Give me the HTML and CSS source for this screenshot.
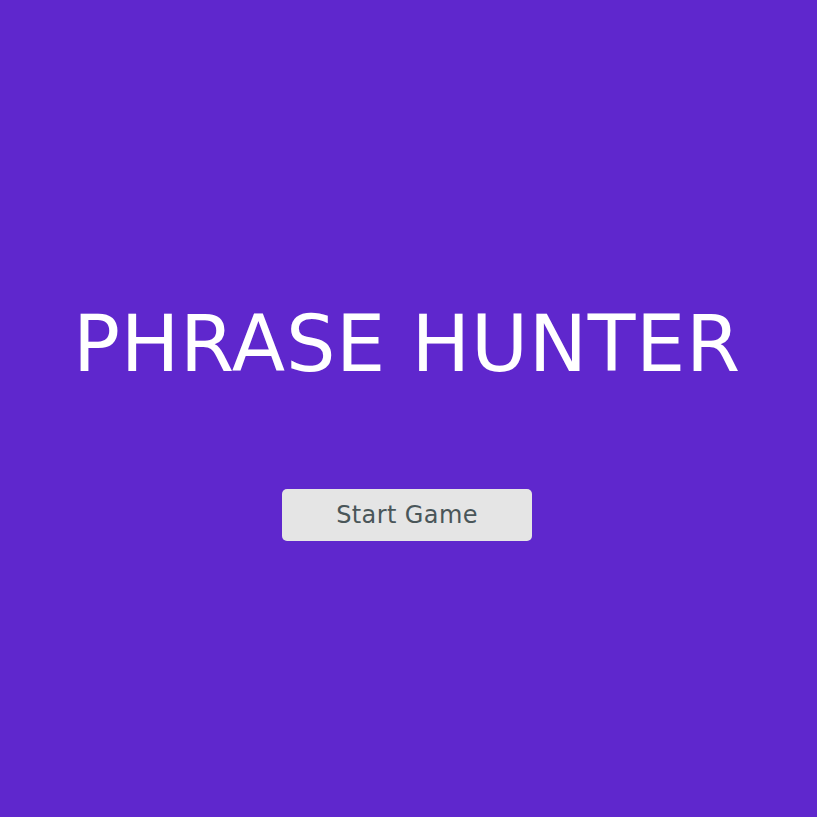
FILE: index.html
```html
<!DOCTYPE html>
<html lang="en">
<head>
<meta charset="utf-8">
<title>Phrase Hunter</title>
<link rel="stylesheet" href="styles.css">
</head>
<body>
<div class="overlay">
  <h2 class="title">PHRASE HUNTER</h2>
  <button class="btn-reset">Start Game</button>
</div>
</body>
</html>
```
FILE: styles.css
```css
html, body {
  margin: 0;
  padding: 0;
  height: 100%;
}
body {
  background: #5f27cd;
  font-family: "DejaVu Sans", "Liberation Sans", sans-serif;
}
.overlay {
  display: flex;
  flex-direction: column;
  align-items: center;
  padding-top: 305px;
  padding-right: 3px;
}
.title {
  margin: 0;
  color: #ffffff;
  font-size: 78px;
  font-weight: normal;
  line-height: 1;
  letter-spacing: 0.7px;
  white-space: nowrap;
}
.btn-reset {
  margin-top: 106px;
  width: 250px;
  height: 52px;
  border: none;
  border-radius: 5px;
  background: #e5e5e5;
  color: #4a5659;
  font-family: "DejaVu Sans", "Liberation Sans", sans-serif;
  font-size: 24px;
  letter-spacing: 0.4px;
  padding: 0;
  cursor: pointer;
}
```
